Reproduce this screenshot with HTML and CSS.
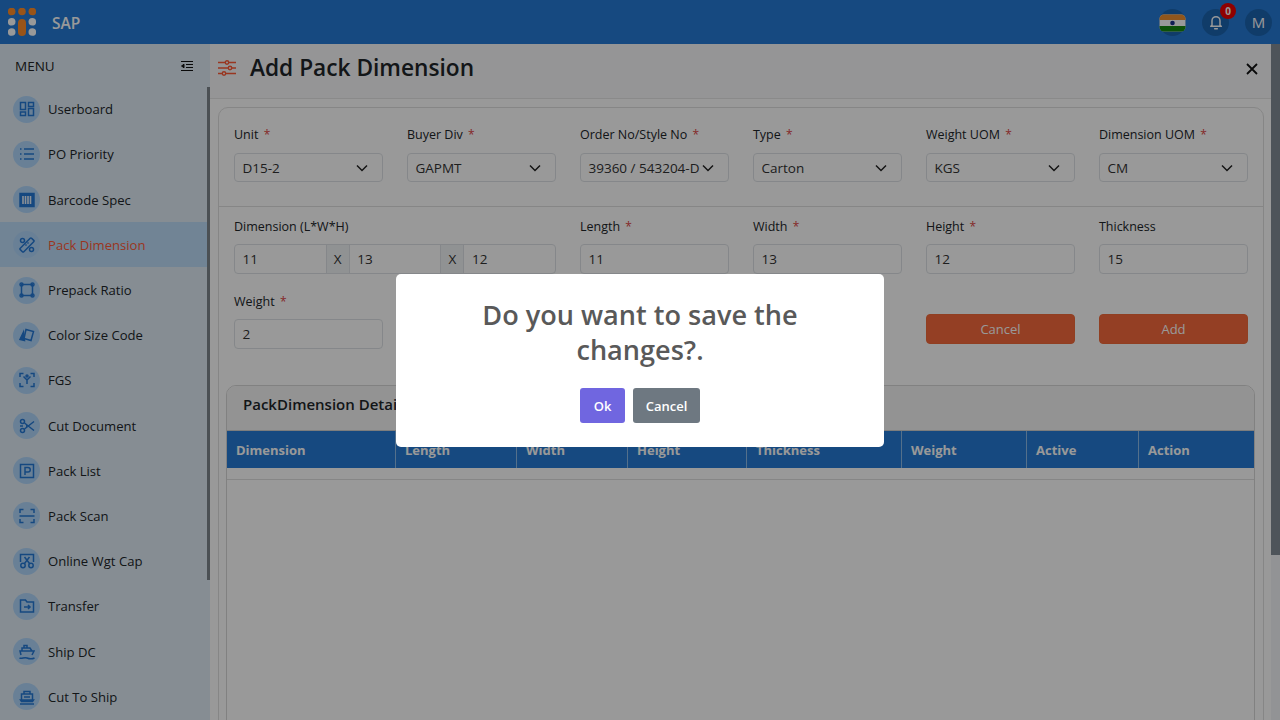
FILE: index.html
```html
<!DOCTYPE html>
<html lang="en">
<head>
<meta charset="utf-8">
<title>SAP - Add Pack Dimension</title>
<link rel="stylesheet" href="styles.css">
</head>
<body>
<header class="topbar">
  <div class="brand">
    <svg class="logo" viewBox="0 0 28 28" width="28" height="28">
      <circle cx="3.700" cy="3.500" r="3.800" fill="#ff8c28"/><circle cx="14" cy="3.500" r="3.800" fill="#ff8c28"/><circle cx="24.300" cy="3.500" r="3.800" fill="#ff8c28"/>
      <circle cx="3.700" cy="13.800" r="3.800" fill="#fff"/><rect x="10" y="11" width="8" height="17" rx="4" fill="#ff8c28"/><circle cx="24.300" cy="13.800" r="3.800" fill="#fff"/>
      <circle cx="3.700" cy="24" r="3.800" fill="#fff"/><circle cx="24.300" cy="24" r="3.800" fill="#fff"/>
    </svg>
    <span class="brand-name">SAP</span>
  </div>
  <div class="top-actions">
    <span class="round-btn flag">
      <svg viewBox="0 0 27 27" width="27" height="27"><rect x="0.500" y="5.500" width="26" height="17" rx="4.500" fill="#fff"/><path d="M.5 11V10a4.500 4.500 0 0 1 4.500-4.500h17A4.500 4.500 0 0 1 26.500 10v1z" fill="#f0902e"/><path d="M.5 17v1a4.500 4.500 0 0 0 4.500 4.500h17a4.500 4.500 0 0 0 4.500-4.500v-1z" fill="#17880f"/><circle cx="13.500" cy="14" r="2.300" fill="#1a2f8c"/></svg>
    </span>
    <span class="round-btn bell">
      <svg viewBox="0 0 24 24" width="16" height="16" fill="none" stroke="#fff" stroke-width="2.200" stroke-linejoin="round" stroke-linecap="round"><path d="M6 17V10a6 6 0 0 1 12 0v7l2 1.500H4z"/><path d="M10 22h4"/></svg>
      <span class="badge">0</span>
    </span>
    <span class="round-btn">M</span>
  </div>
</header>

<div class="layout">
  <aside class="sidebar">
    <div class="menu-head">
      <span>MENU</span>
      <svg viewBox="0 0 14 12" width="14" height="12" fill="none" stroke="#111" stroke-width="1"><path d="M1 1.500h12M6 4.500h7M6 7.500h7M1 10.500h12"/><path d="M4 4.200 1.500 6 4 7.800z" fill="#111"/></svg>
    </div>
    <div class="menu-body">
      <nav class="menu-list">
        <a class="menu-item"><span class="ico"><svg viewBox="0 0 16 16"><rect x="1.500" y="1.500" width="5" height="7"/><rect x="9.500" y="1.500" width="5" height="4"/><rect x="1.500" y="11" width="5" height="3.500"/><rect x="9.500" y="7.500" width="5" height="7"/></svg></span>Userboard</a>
        <a class="menu-item"><span class="ico"><svg viewBox="0 0 16 16"><path d="M5 3h10M5 8h10M5 13h10M1 3h1.500M1 8h1.500M1 13h1.500"/></svg></span>PO Priority</a>
        <a class="menu-item"><span class="ico"><svg viewBox="0 0 16 16"><rect x="1" y="1.500" width="14" height="13" fill="#2478d5"/><path d="M4 4v8M6.500 4v8M9 4v8M11.500 4v8" stroke="#e6f0fa" stroke-width="1.600"/></svg></span>Barcode Spec</a>
        <a class="menu-item active"><span class="ico"><svg viewBox="0 0 16 16"><rect x="5.500" y="0" width="5" height="16" rx="1" transform="rotate(45 8 8)"/><circle cx="3.500" cy="3.500" r="2"/><circle cx="12.500" cy="12.500" r="2"/><path d="M8.500 5.500l1 1M6.500 7.500l1 1"/></svg></span>Pack Dimension</a>
        <a class="menu-item"><span class="ico"><svg viewBox="0 0 16 16"><rect x="2.500" y="2.500" width="11" height="11"/><circle cx="2.500" cy="2.500" r="1.500"/><circle cx="13.500" cy="2.500" r="1.500"/><circle cx="2.500" cy="13.500" r="1.500"/><circle cx="13.500" cy="13.500" r="1.500"/></svg></span>Prepack Ratio</a>
        <a class="menu-item"><span class="ico"><svg viewBox="0 0 16 16"><path d="M7 2.500l7.500 2L12 13.500 5 11.500z"/><path d="M4.500 5 1 12.500l4.500 1z" fill="#2478d5"/></svg></span>Color Size Code</a>
        <a class="menu-item"><span class="ico"><svg viewBox="0 0 16 16"><path d="M1 5V1.500h3.500M11.500 1.500H15V5M1 11v3.500h3.500M11.500 14.500H15V11M4.500 4.500l3.500 3.500 3.500-3.500M8 8v4"/><circle cx="8" cy="4" r="1"/></svg></span>FGS</a>
        <a class="menu-item"><span class="ico"><svg viewBox="0 0 16 16"><circle cx="3.500" cy="3.500" r="2"/><circle cx="3.500" cy="12.500" r="2"/><path d="M5.500 11 15 3.500M5.500 5 15 12.500M1 8h3M7 8h1"/></svg></span>Cut Document</a>
        <a class="menu-item"><span class="ico"><svg viewBox="0 0 16 16"><rect x="1.500" y="1.500" width="13" height="13"/><path d="M6 12V4.500h3a2 2 0 0 1 0 4.500H6"/></svg></span>Pack List</a>
        <a class="menu-item"><span class="ico"><svg viewBox="0 0 16 16"><path d="M1 5V1.500h3.500M11.500 1.500H15V5M1 11v3.500h3.500M11.500 14.500H15V11M0.500 8h15"/></svg></span>Pack Scan</a>
        <a class="menu-item"><span class="ico"><svg viewBox="0 0 16 16"><path d="M1.500 9V1.500h13V9"/><circle cx="4" cy="12.500" r="2.200"/><circle cx="12" cy="12.500" r="2.200"/><path d="M5.500 4l5 6.500M10.500 4l-5 6.500"/></svg></span>Online Wgt Cap</a>
        <a class="menu-item"><span class="ico"><svg viewBox="0 0 16 16"><path d="M1.500 14V2h5l1.500 2h6.500v10zM5 9h6M9 7l2 2-2 2"/></svg></span>Transfer</a>
        <a class="menu-item"><span class="ico"><svg viewBox="0 0 16 16"><path d="M2 11 1 7h14l-2 4M3 7V4h8l2 3M5 4V1.500h3V4M0.500 14c2.500 1.200 4.500-1.200 7.500 0s5 1.200 7.500 0"/></svg></span>Ship DC</a>
        <a class="menu-item"><span class="ico"><svg viewBox="0 0 16 16"><path d="M2.500 11V5h11v6M1.500 11h13l-1 1.500h-11zM5 5V2.500h6V5M5 8h6M1 15h14"/></svg></span>Cut To Ship</a>
      </nav>
      <div class="side-rail"><div class="side-thumb"></div></div>
    </div>
  </aside>

  <main class="content">
    <div class="page">
      <div class="title-bar">
        <div class="title-left">
          <svg class="title-ico" viewBox="0 0 18 16" width="18" height="16" fill="none" stroke="#ff5a36" stroke-width="1.400"><path d="M0 2.500h7M11 2.500h7M0 8h10M14 8h4M0 13.500h4M8 13.500h10"/><circle cx="9" cy="2.500" r="1.700"/><circle cx="12" cy="8" r="1.700"/><circle cx="6" cy="13.500" r="1.700"/></svg>
          <h1>Add Pack Dimension</h1>
        </div>
        <svg class="close" viewBox="0 0 12 12" width="12" height="12" fill="none" stroke="#111" stroke-width="1.800"><path d="M1 1l10 10M11 1 1 11"/></svg>
      </div>

      <section class="form-card">
        <div class="form-area">
          <div class="form-row first">
            <div class="field"><label>Unit <i>*</i></label><div class="select"><span>D15-2</span><svg viewBox="0 0 12 8" width="12" height="8"><path d="M1 1.500 6 6.500 11 1.500"/></svg></div></div>
            <div class="field"><label>Buyer Div <i>*</i></label><div class="select"><span>GAPMT</span><svg viewBox="0 0 12 8" width="12" height="8"><path d="M1 1.500 6 6.500 11 1.500"/></svg></div></div>
            <div class="field"><label>Order No/Style No <i>*</i></label><div class="select"><span>39360 / 543204-D</span><svg viewBox="0 0 12 8" width="12" height="8"><path d="M1 1.500 6 6.500 11 1.500"/></svg></div></div>
            <div class="field"><label>Type <i>*</i></label><div class="select"><span>Carton</span><svg viewBox="0 0 12 8" width="12" height="8"><path d="M1 1.500 6 6.500 11 1.500"/></svg></div></div>
            <div class="field"><label>Weight UOM <i>*</i></label><div class="select"><span>KGS</span><svg viewBox="0 0 12 8" width="12" height="8"><path d="M1 1.500 6 6.500 11 1.500"/></svg></div></div>
            <div class="field"><label>Dimension UOM <i>*</i></label><div class="select"><span>CM</span><svg viewBox="0 0 12 8" width="12" height="8"><path d="M1 1.500 6 6.500 11 1.500"/></svg></div></div>
          </div>
          <div class="form-row second">
            <div class="field span2"><label>Dimension (L*W*H)</label>
              <div class="dim-group"><span class="dim-val">11</span><span class="dim-x">X</span><span class="dim-val">13</span><span class="dim-x">X</span><span class="dim-val">12</span></div>
            </div>
            <div class="field"><label>Length <i>*</i></label><div class="input">11</div></div>
            <div class="field"><label>Width <i>*</i></label><div class="input">13</div></div>
            <div class="field"><label>Height <i>*</i></label><div class="input">12</div></div>
            <div class="field"><label>Thickness</label><div class="input">15</div></div>
            <div class="field"><label>Weight <i>*</i></label><div class="input">2</div></div>
            <div class="field col5 action"><button class="btn-orange">Cancel</button></div>
            <div class="field action"><button class="btn-orange">Add</button></div>
          </div>
        </div>

        <section class="table-card">
          <div class="table-title">PackDimension Details</div>
          <div class="thead">
            <span class="th w-dim">Dimension</span><span class="th w-len">Length</span><span class="th w-wid">Width</span><span class="th w-hei">Height</span><span class="th w-thi">Thickness</span><span class="th w-wei">Weight</span><span class="th w-act">Active</span><span class="th w-acn">Action</span>
          </div>
          <div class="tfilter"></div>
        </section>
      </section>
    </div>
    <div class="page-rail"><div class="page-thumb"></div></div>
  </main>
</div>

<div class="backdrop">
  <div class="dialog">
    <h2>Do you want to save the changes?.</h2>
    <div class="dialog-actions">
      <button class="btn-ok">Ok</button>
      <button class="btn-cancel">Cancel</button>
    </div>
  </div>
</div>
</body>
</html>
```
FILE: styles.css
```css
* { box-sizing: border-box; }
html, body { margin: 0; height: 100%; overflow: hidden; }
body { font-family: "Open Sans", "Noto Sans", sans-serif; font-size: 13.5px; color: #212529; background: #fff; display: flex; flex-direction: column; }

.topbar { height: 44px; flex: none; background: #257bd5; display: flex; align-items: center; justify-content: space-between; padding: 0 8px; }
.brand { display: flex; align-items: center; gap: 16px; }
.logo { display: block; }
.brand-name { color: #fff; font-size: 15.5px; font-weight: 600; padding-top: 1px; }
.top-actions { display: flex; align-items: center; gap: 16px; }
.round-btn { width: 27px; height: 27px; border-radius: 50%; background: #1c64b0; color: #fff; font-size: 15px; display: flex; align-items: center; justify-content: center; position: relative; }
.flag svg { display: block; }
.badge { position: absolute; top: -6px; right: -7px; width: 16px; height: 16px; border-radius: 50%; background: #e00; color: #fff; font-size: 10px; font-weight: 700; display: flex; align-items: center; justify-content: center; }

.layout { flex: 1; min-height: 0; display: flex; }

.sidebar { width: 210px; flex: none; background: #dfecf6; display: flex; flex-direction: column; }
.menu-head { height: 42.700px; flex: none; display: flex; align-items: center; justify-content: space-between; padding: 2px 16px 0 15px; font-size: 13.500px; color: #222; }
.menu-body { flex: 1; min-height: 0; display: flex; }
.menu-list { flex: 1; min-width: 0; overflow: hidden; }
.side-rail { width: 3px; flex: none; }
.side-thumb { height: 493px; background: #7d858d; }
.menu-item { height: 45.200px; display: flex; align-items: center; gap: 8px; padding-left: 13px; color: #212529; font-size: 13.100px; margin-right: -3px; }
.menu-item.active { background: #bcdcf8; color: #ff5a36; }
.ico { width: 27px; height: 27px; flex: none; border-radius: 50%; background: #b0d6fa; display: flex; align-items: center; justify-content: center; }
.ico svg { width: 16px; height: 16px; fill: none; stroke: #2478d5; stroke-width: 1.500; }

.content { flex: 1; min-width: 0; display: flex; background: #fff; }
.page { flex: 1; min-width: 0; overflow: hidden; }
.page-rail { width: 9px; flex: none; background: #f4f6f8; }
.page-thumb { height: 511px; background: #828c96; }

.title-bar { height: 55px; display: flex; align-items: center; justify-content: space-between; padding: 0 13px 7px 8px; background: #f8f9fb; border-bottom: 1px solid #e6e6e6; }
.title-left { display: flex; align-items: center; gap: 14px; }
.title-ico { display: block; }
h1 { margin: 0; font-size: 22.700px; font-weight: 560; color: #212529; }
.close { display: block; margin-top: 3px; }

.form-card { margin: 8px 7px 0 8px; border: 1px solid #e0e0e0; border-radius: 10px 10px 0 0; height: 640px; overflow: hidden; }
.form-area { height: 277px; }
.form-row { display: grid; grid-template-columns: repeat(6, 149.200px); column-gap: 23.800px; padding: 0 15px; }
.form-row.first { padding-top: 17px; height: 99px; border-bottom: 1px solid #e0e0e0; }
.form-row.second { padding-top: 10px; row-gap: 17.500px; }
.second label { margin-bottom: 8px; }
.span2 { grid-column: span 2; }
.col5 { grid-column: 5; }
.action { display: flex; align-items: flex-end; padding-bottom: 5px; }
label { display: block; font-size: 12.500px; line-height: 19px; margin-bottom: 9px; color: #212529; }
label i { color: #d44; font-style: normal; font-size: 12px; margin-left: 2px; }
.select, .input, .dim-group { border: 1px solid #dee2e6; border-radius: 4px; font-size: 13.500px; color: #333; background: #fff; }
.select { height: 29px; display: flex; align-items: center; justify-content: space-between; padding: 0 14px 0 7.500px; }
.select span { white-space: nowrap; overflow: hidden; flex: 1; min-width: 0; }
.select svg { flex: none; fill: none; stroke: #222; stroke-width: 1.500; margin-left: 2px; }
.input { height: 30px; display: flex; align-items: center; padding-left: 7.500px; }
.dim-group { height: 30px; display: flex; align-items: stretch; }
.dim-val { flex: 1; display: flex; align-items: center; padding-left: 7.500px; }
.dim-x { width: 24px; flex: none; display: flex; align-items: center; justify-content: center; background: #f1f3f5; border-left: 1px solid #dee2e6; border-right: 1px solid #dee2e6; }
.btn-orange { width: 100%; height: 30px; border: 1px solid #f06a3a; border-radius: 4px; background: #f7693c; color: #fff; font: inherit; font-size: 13px; }

.table-card { margin: 0 8px 0 7px; border: 1px solid #d8d8d8; border-radius: 10px 10px 0 0; height: 360px; background: #fff; overflow: hidden; }
.table-title { height: 45px; background: #f6f6f6; border-bottom: 1px solid #d0d0d0; display: flex; align-items: center; padding: 0 0 9px 16px; font-size: 15px; font-weight: 600; color: #212529; }
.thead { height: 37px; background: #257bd5; display: flex; }
.th { display: flex; align-items: center; padding-left: 9px; color: #fff; font-size: 13px; font-weight: 700; border-right: 1px solid #8dbbe8; flex: none; }
.th:last-child { border-right: 0; flex: 1; }
.w-dim { width: 169px; } .w-len { width: 121px; } .w-wid { width: 111px; } .w-hei { width: 119px; } .w-thi { width: 155px; } .w-wei { width: 125px; } .w-act { width: 112px; }
.tfilter { height: 12px; border-bottom: 1px solid #e0e0e0; }

.backdrop { position: fixed; inset: 0; background: rgba(0,0,0,.4); display: flex; align-items: flex-start; justify-content: center; padding-top: 274px; }
.dialog { width: 488px; height: 173px; background: #fff; border-radius: 5px; padding: 23px 40px 0; text-align: center; }
h2 { margin: 0; font-size: 27.100px; line-height: 35px; font-weight: 550; color: #595959; }
.dialog-actions { margin-top: 21px; display: flex; justify-content: center; gap: 8px; }
.dialog-actions button { height: 35px; border: 0; border-radius: 3px; color: #fff; font: inherit; font-size: 13px; font-weight: 600; }
.btn-ok { width: 45px; background: #7066e0; }
.btn-cancel { width: 67px; background: #6e7881; }
```
